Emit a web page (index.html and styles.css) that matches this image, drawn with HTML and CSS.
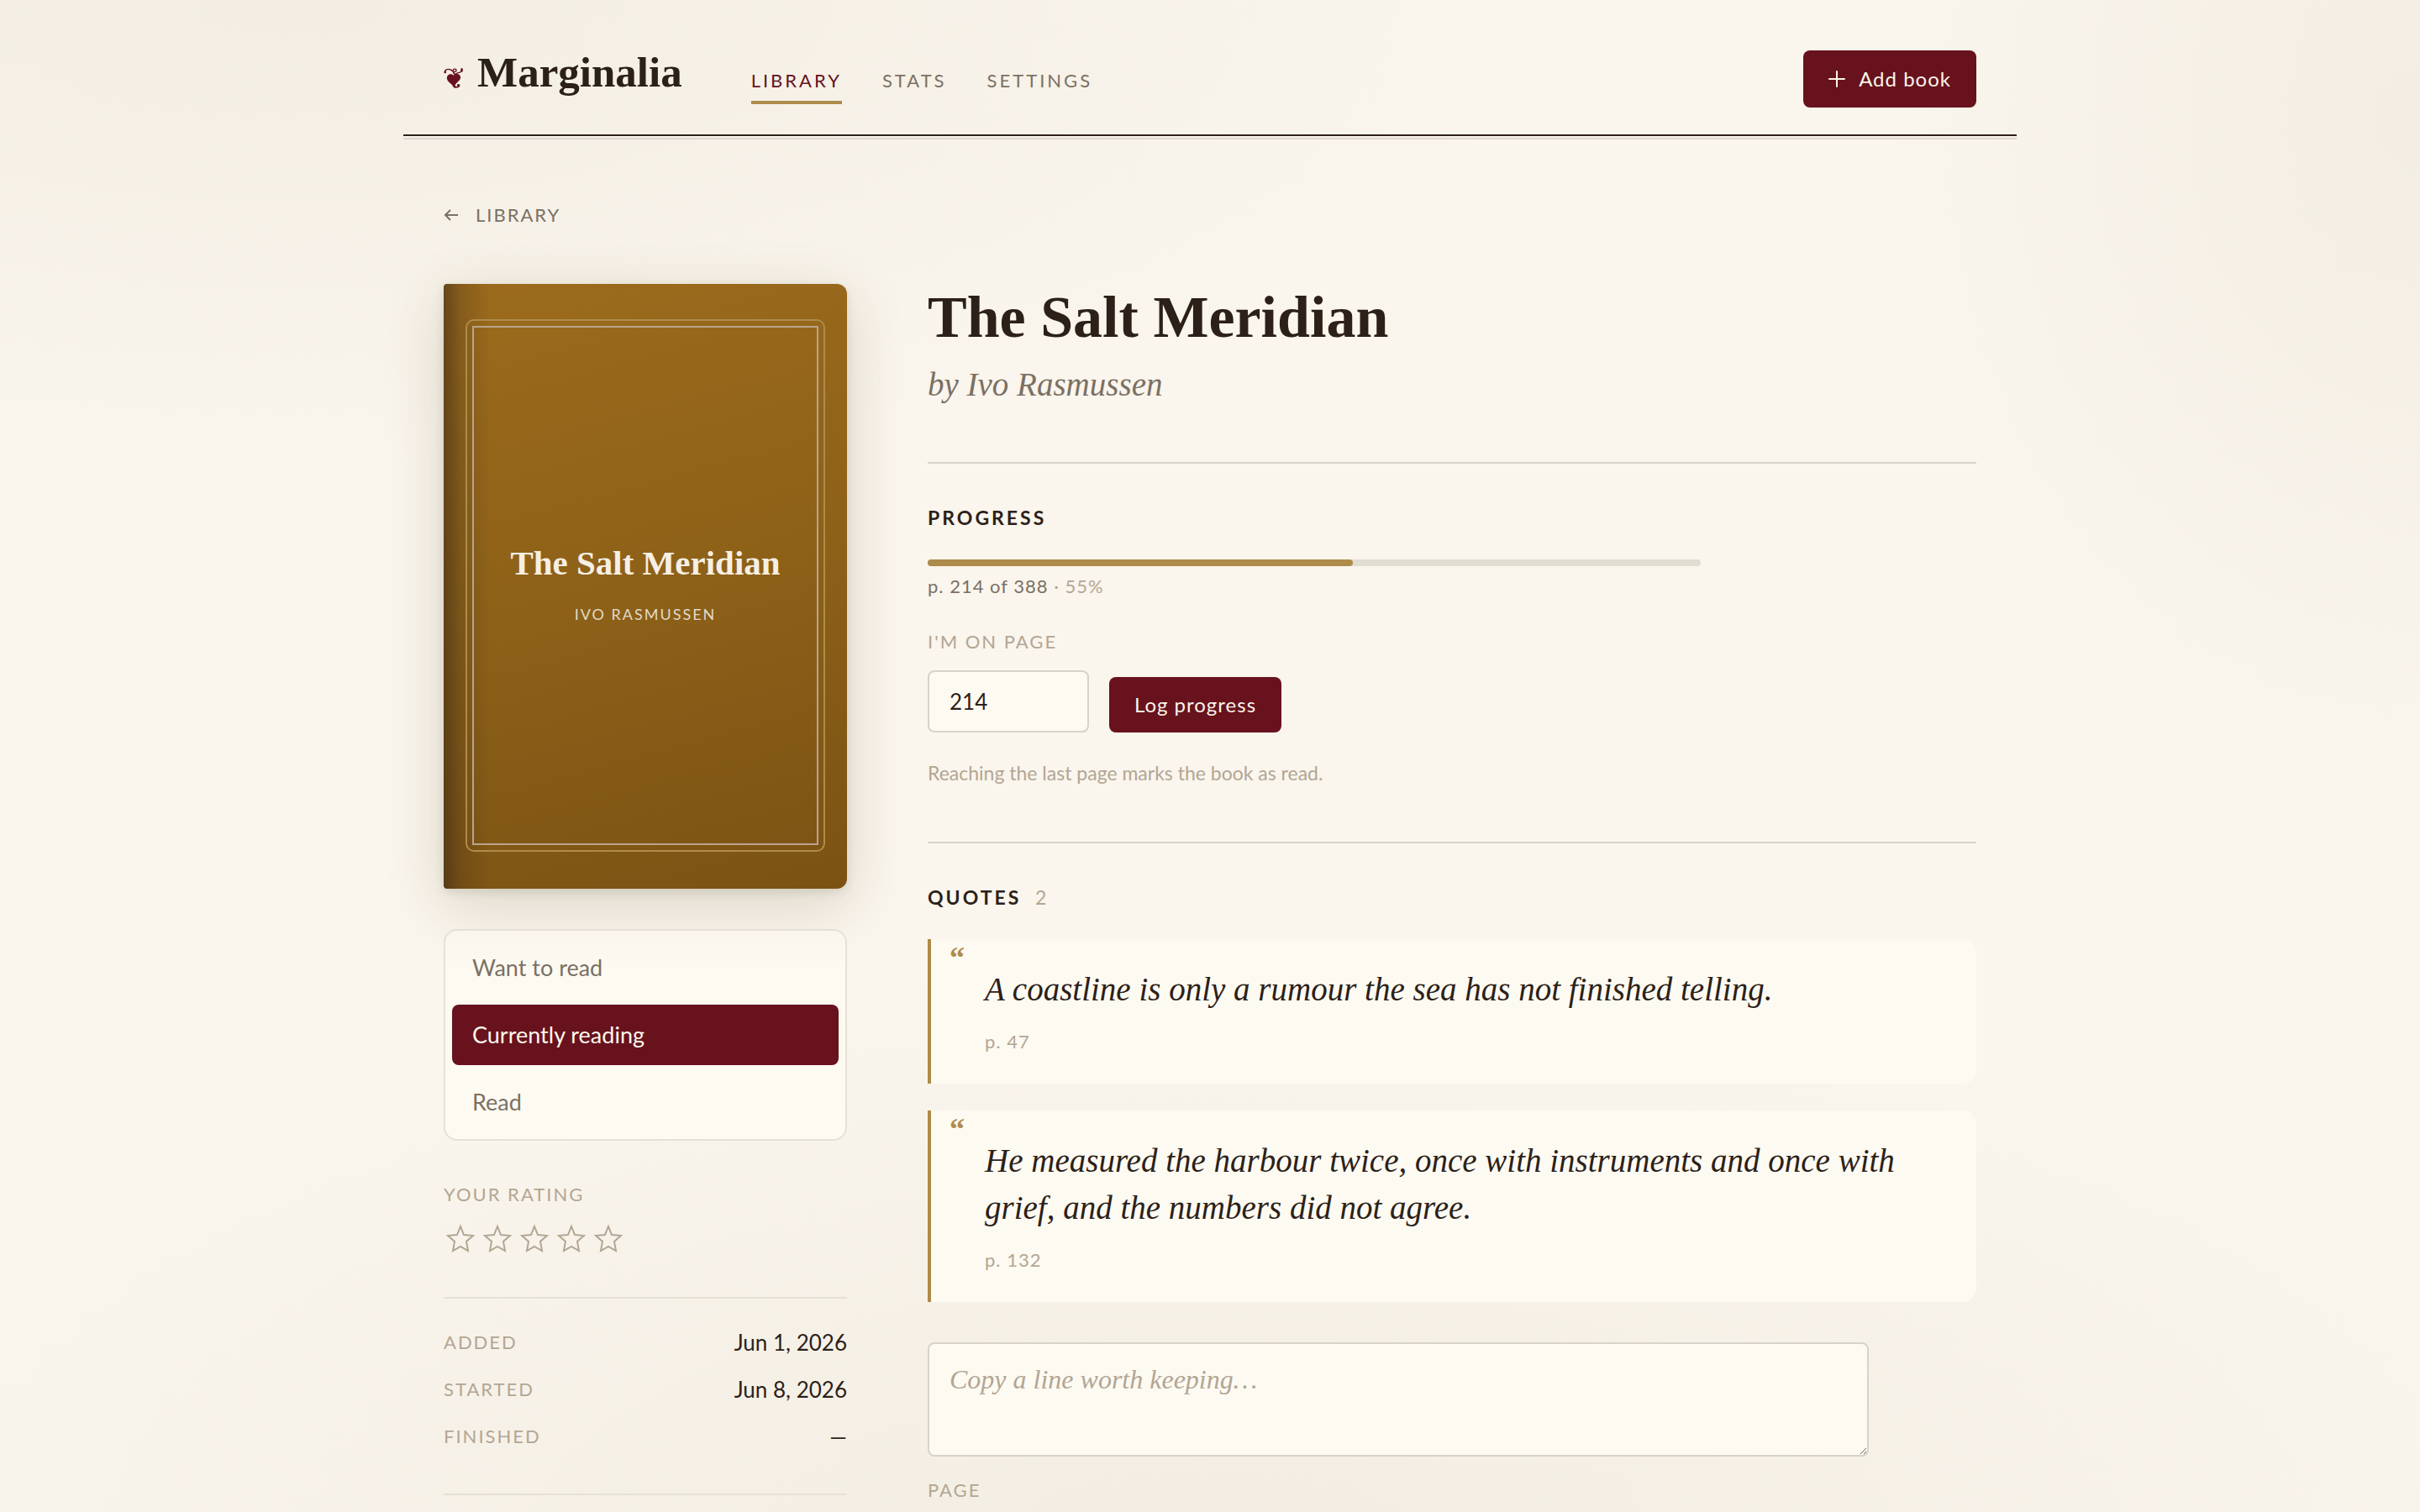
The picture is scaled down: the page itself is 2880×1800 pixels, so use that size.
FILE: index.html
```html
<!DOCTYPE html>
<html lang="en">
<head>
    <meta charset="UTF-8">
    <meta name="viewport" content="width=device-width, initial-scale=1.0">
    <title>The Salt Meridian - Marginalia</title>
    <link rel="stylesheet" href="styles.css">
</head>
<body>
    <!-- Header -->
    <header class="site-header">
        <a href="#" class="brand">
            <svg class="brand-mark" viewBox="0 0 66 68" aria-hidden="true">
                <path class="vine" d="M4 14C2 6 12 2 20 5C30 8 34 14 37 24M36 22C26 10 32 0 39 4C45 8 40 14 34 12M38 22C42 14 50 18 58 12"/>
                <circle cx="4" cy="14" r="4"/>
                <ellipse cx="60" cy="7" rx="4" ry="7"/>
                <path d="M33 25C24 15 9 22 10 35C11 48 26 52 31 63C34 69 44 68 50 65C57 60 54 53 47 54C43 55 43 59 46 60C42 64 37 62 38 57C40 50 56 42 56 31C55 19 41 16 33 25Z"/>
            </svg>
            <span>Marginalia</span>
        </a>
        <nav class="nav">
            <a href="#" class="active">Library</a>
            <a href="#">Stats</a>
            <a href="#">Settings</a>
        </nav>
        <button class="btn btn-add">
            <svg viewBox="0 0 20 20" aria-hidden="true"><path d="M10 1V19M1 10H19"/></svg>
            Add book
        </button>
    </header>

    <main class="page">
        <a href="#" class="back">
            <svg viewBox="0 0 18 16" aria-hidden="true"><path d="M17 8H2M8 2L2 8L8 14"/></svg>
            Library
        </a>

        <div class="book">
            <!-- Left column -->
            <aside class="side">
                <div class="cover">
                    <div class="cover-frame">
                        <div class="cover-inner">
                            <p class="cover-title">The Salt Meridian</p>
                            <p class="cover-author">Ivo Rasmussen</p>
                        </div>
                    </div>
                </div>

                <div class="status">
                    <button>Want to read</button>
                    <button class="selected">Currently reading</button>
                    <button>Read</button>
                </div>

                <div class="rating">
                    <p class="label">Your rating</p>
                    <div class="stars">
                        <button aria-label="1 star"><svg viewBox="0 0 40 40"><path d="M20 6L24 16L35 17L27 24L29 35L20 30L11 35L13 24L5 17L16 16Z"/></svg></button>
                        <button aria-label="2 stars"><svg viewBox="0 0 40 40"><path d="M20 6L24 16L35 17L27 24L29 35L20 30L11 35L13 24L5 17L16 16Z"/></svg></button>
                        <button aria-label="3 stars"><svg viewBox="0 0 40 40"><path d="M20 6L24 16L35 17L27 24L29 35L20 30L11 35L13 24L5 17L16 16Z"/></svg></button>
                        <button aria-label="4 stars"><svg viewBox="0 0 40 40"><path d="M20 6L24 16L35 17L27 24L29 35L20 30L11 35L13 24L5 17L16 16Z"/></svg></button>
                        <button aria-label="5 stars"><svg viewBox="0 0 40 40"><path d="M20 6L24 16L35 17L27 24L29 35L20 30L11 35L13 24L5 17L16 16Z"/></svg></button>
                    </div>
                </div>

                <dl class="dates">
                    <div><dt class="label">Added</dt><dd>Jun 1, 2026</dd></div>
                    <div><dt class="label">Started</dt><dd>Jun 8, 2026</dd></div>
                    <div><dt class="label">Finished</dt><dd>—</dd></div>
                </dl>
            </aside>

            <!-- Right column -->
            <div class="content">
                <h1>The Salt Meridian</h1>
                <p class="byline">by Ivo Rasmussen</p>

                <section class="block">
                    <h2>Progress</h2>
                    <div class="bar"><div class="bar-fill" style="width: 55%"></div></div>
                    <p class="pages">p. 214 of 388 <span>· 55%</span></p>
                    <form class="log">
                        <div class="field">
                            <label class="label" for="onPage">I'm on page</label>
                            <input type="text" inputmode="numeric" id="onPage" value="214">
                        </div>
                        <button type="button" class="btn">Log progress</button>
                    </form>
                    <p class="hint">Reaching the last page marks the book as read.</p>
                </section>

                <section class="block">
                    <h2>Quotes <span>2</span></h2>
                    <div class="quotes">
                        <blockquote class="quote">
                            <p>A coastline is only a rumour the sea has not finished telling.</p>
                            <footer>p. 47</footer>
                        </blockquote>
                        <blockquote class="quote">
                            <p>He measured the harbour twice, once with instruments and once with grief, and the numbers did not agree.</p>
                            <footer>p. 132</footer>
                        </blockquote>
                    </div>
                    <form class="new-quote">
                        <textarea aria-label="New quote" placeholder="Copy a line worth keeping…"></textarea>
                        <label class="label" for="quotePage">Page</label>
                        <input type="text" id="quotePage">
                    </form>
                </section>
            </div>
        </div>
    </main>
</body>
</html>
```
FILE: styles.css
```css
:root {
    --ink: #2c2118;
    --muted: #7b7063;
    --faint: #b2a693;
    --wine: #68121e;
    --gold: #ae8b4b;
    --card: #fdfaf2;
    --line: #d7d2ca;
    --line-soft: #e6e1d6;
    --serif: "Liberation Serif", serif;
    --sans: Lato, sans-serif;
}

* {
    box-sizing: border-box;
}

html {
    overflow: hidden;
    height: 100%;
}

body {
    margin: 0;
    height: 100%;
    overflow: hidden;
    color: var(--ink);
    font-family: var(--sans);
    font-size: 26px;
    background:
        radial-gradient(ellipse 1500px 560px at 12% 0, rgba(222, 216, 196, 0.25), transparent),
        radial-gradient(ellipse 640px 800px at 100% 8%, rgba(222, 216, 196, 0.25), transparent),
        radial-gradient(ellipse 1700px 720px at 50% 104%, rgba(222, 216, 196, 0.28), transparent),
        #faf5ed;
}

h1, h2, p, dl, dd, blockquote {
    margin: 0;
}

a {
    color: inherit;
    text-decoration: none;
}

button, input, textarea {
    font-family: inherit;
}

button {
    cursor: pointer;
    border: none;
    background: none;
}

svg {
    fill: none;
    stroke: currentColor;
    stroke-width: 2;
}

/* Header */
.site-header {
    position: relative;
    display: flex;
    align-items: center;
    max-width: 1920px;
    height: 162px;
    margin: 0 auto;
    padding: 28px 48px 0;
    border-bottom: 2px solid var(--ink);
    box-shadow: 0 2px 0 #f9f4ec, 0 4px 0 #ddd5cf;
}

.brand {
    display: flex;
    align-items: center;
    gap: 16px;
    margin-right: 82px;
    padding-bottom: 16px;
    font-family: var(--serif);
    font-size: 51px;
    font-weight: bold;
    line-height: 60px;
}

.brand-mark {
    width: 24px;
    height: 24px;
    margin-top: 14px;
    color: var(--wine);
    fill: currentColor;
    stroke: none;
}

.brand-mark .vine {
    fill: none;
    stroke: currentColor;
    stroke-width: 4;
}

.nav {
    display: flex;
    gap: 48px;
    margin-top: 8px;
}

.nav a {
    padding: 12px 0;
    color: var(--muted);
    font-size: 22px;
    line-height: 24px;
    letter-spacing: 3px;
    text-transform: uppercase;
    border-bottom: 4px solid transparent;
}

.nav a.active {
    color: var(--wine);
    border-color: var(--gold);
}

.btn {
    display: flex;
    align-items: center;
    gap: 16px;
    padding: 18px 30px;
    border-radius: 8px;
    background: var(--wine);
    color: #fbf5e9;
    font-size: 24px;
    line-height: 30px;
    letter-spacing: 1px;
}

.btn svg {
    width: 20px;
    height: 20px;
    stroke-width: 2;
    stroke-linecap: round;
}

.btn-add {
    height: 68px;
    margin-left: auto;
}

/* Page */
.page {
    max-width: 1920px;
    margin: 0 auto;
    padding: 76px 48px 0;
}

.back {
    display: inline-flex;
    align-items: center;
    gap: 20px;
    color: var(--muted);
    font-size: 22px;
    line-height: 28px;
    letter-spacing: 2px;
    text-transform: uppercase;
}

.back svg {
    width: 18px;
    height: 16px;
}

.book {
    display: grid;
    grid-template-columns: 480px minmax(0, 1fr);
    gap: 96px;
    margin-top: 68px;
}

.label {
    color: var(--faint);
    font-size: 22px;
    line-height: 28px;
    letter-spacing: 2px;
    text-transform: uppercase;
}

/* Cover */
.cover {
    display: flex;
    aspect-ratio: 2 / 3;
    padding: 42px 26px 44px;
    border-radius: 4px 12px 12px 4px;
    background:
        linear-gradient(90deg, rgba(44, 33, 24, 0.5), rgba(44, 33, 24, 0.2) 20px, transparent 56px),
        linear-gradient(165deg, #9c6b1d, #8d6118 50%, #7c5214);
    box-shadow: 0 4px 12px rgba(60, 50, 20, 0.12), 0 20px 70px rgba(80, 70, 30, 0.18);
    color: #f6efe4;
}

.cover-frame {
    display: flex;
    flex: 1;
    padding: 6px;
    border: 2px solid var(--gold);
    border-radius: 10px;
}

.cover-inner {
    display: flex;
    flex: 1;
    flex-direction: column;
    align-items: center;
    justify-content: center;
    gap: 24px;
    padding-bottom: 6px;
    border: 2px solid #b8a58d;
    text-align: center;
}

.cover-title {
    font-family: var(--serif);
    font-size: 41px;
    font-weight: bold;
    line-height: 50px;
}

.cover-author {
    color: #e3d9c7;
    font-size: 18px;
    line-height: 24px;
    letter-spacing: 2px;
    text-transform: uppercase;
}

/* Reading status */
.status {
    display: flex;
    flex-direction: column;
    gap: 8px;
    margin-top: 48px;
    padding: 8px;
    border: 2px solid var(--line-soft);
    border-radius: 16px;
    background: linear-gradient(#faf5ed, var(--card) 48px);
}

.status button {
    padding: 20px 24px;
    border-radius: 8px;
    color: var(--muted);
    font-size: 27px;
    line-height: 32px;
    text-align: left;
}

.status .selected {
    background: var(--wine);
    color: #fdf8ec;
}

.rating {
    margin-top: 50px;
}

.stars {
    display: flex;
    gap: 4px;
    margin-top: 18px;
}

.stars button {
    padding: 0;
    color: var(--faint);
}

.stars svg {
    display: block;
    width: 40px;
    height: 40px;
}

.dates {
    margin-top: 50px;
    padding: 24px 0 40px;
    border: solid var(--line-soft);
    border-width: 2px 0;
}

.dates div {
    display: flex;
    justify-content: space-between;
    align-items: center;
    height: 56px;
}

/* Title block */
.content h1 {
    font-family: var(--serif);
    font-size: 70px;
    line-height: 80px;
}

.byline {
    margin-top: 16px;
    color: var(--muted);
    font-family: var(--serif);
    font-size: 39px;
    font-style: italic;
    line-height: 48px;
}

.block {
    margin-top: 68px;
    padding-top: 50px;
    border-top: 2px solid var(--line);
}

.block h2 {
    font-size: 23px;
    line-height: 28px;
    letter-spacing: 3px;
    text-transform: uppercase;
}

.block h2 span {
    margin-left: 8px;
    color: var(--faint);
    font-weight: normal;
}

/* Progress */
.bar {
    max-width: 920px;
    height: 8px;
    margin-top: 36px;
    border-radius: 4px;
    background: #e2ddd2;
}

.bar-fill {
    height: 100%;
    border-radius: 4px;
    background: var(--gold);
}

.pages {
    margin-top: 10px;
    color: var(--muted);
    font-size: 22px;
    line-height: 28px;
    letter-spacing: 1px;
}

.pages span {
    color: var(--faint);
}

.log {
    display: flex;
    align-items: flex-end;
    gap: 24px;
    margin-top: 38px;
}

.field {
    display: flex;
    flex-direction: column;
    gap: 20px;
}

.log input, .new-quote input {
    width: 192px;
    height: 74px;
    padding: 0 24px;
    border: 2px solid var(--line);
    border-radius: 8px;
    background: var(--card);
    color: var(--ink);
    font-size: 26px;
}

.hint {
    margin-top: 34px;
    color: var(--faint);
    font-size: 23px;
    line-height: 28px;
}

/* Quotes */
.quotes {
    display: flex;
    flex-direction: column;
    gap: 32px;
    margin-top: 36px;
}

.quote {
    position: relative;
    padding: 32px 68px 36px 64px;
    border-left: 4px solid var(--gold);
    border-radius: 0 16px 16px 0;
    background: var(--card);
}

.quote::before {
    content: "“";
    position: absolute;
    top: 0;
    left: 22px;
    color: var(--gold);
    font-family: var(--serif);
    font-size: 36px;
    font-weight: bold;
    line-height: 44px;
}

.quote p {
    font-family: var(--serif);
    font-size: 39px;
    font-style: italic;
    line-height: 56px;
}

.quote footer {
    margin-top: 20px;
    color: var(--faint);
    font-size: 22px;
    line-height: 28px;
    letter-spacing: 1px;
}

.new-quote {
    display: flex;
    flex-direction: column;
    align-items: flex-start;
    gap: 20px;
    margin-top: 48px;
}

.new-quote textarea {
    width: 100%;
    max-width: 1120px;
    height: 136px;
    margin-bottom: 6px;
    padding: 18px 24px;
    border: 2px solid var(--line);
    border-radius: 8px;
    background: var(--card);
    font-family: var(--serif);
    font-size: 32px;
    font-style: italic;
    line-height: 48px;
}

.new-quote textarea::placeholder {
    color: var(--faint);
}
```
